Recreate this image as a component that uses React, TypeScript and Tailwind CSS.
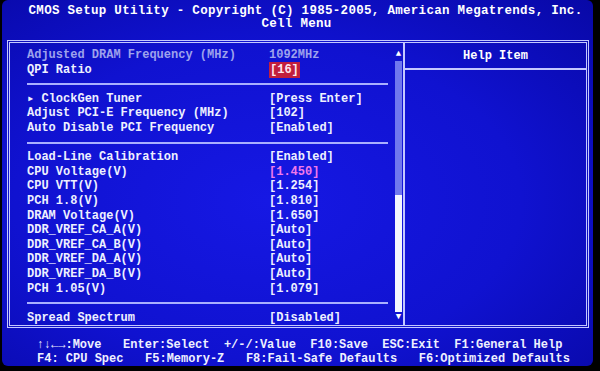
import React from 'react';

type Row = { label: string; value: string; tone?: 'dim' | 'sel' | 'pink' };

const groups: Row[][] = [
  [
    { label: 'Adjusted DRAM Frequency (MHz)', value: '1092MHz', tone: 'dim' },
    { label: 'QPI Ratio', value: '[16]', tone: 'sel' },
  ],
  [
    { label: '\u25B8 ClockGen Tuner', value: '[Press Enter]' },
    { label: 'Adjust PCI-E Frequency (MHz)', value: '[102]' },
    { label: 'Auto Disable PCI Frequency', value: '[Enabled]' },
  ],
  [
    { label: 'Load-Line Calibration', value: '[Enabled]' },
    { label: 'CPU Voltage(V)', value: '[1.450]', tone: 'pink' },
    { label: 'CPU VTT(V)', value: '[1.254]' },
    { label: 'PCH 1.8(V)', value: '[1.810]' },
    { label: 'DRAM Voltage(V)', value: '[1.650]' },
    { label: 'DDR_VREF_CA_A(V)', value: '[Auto]' },
    { label: 'DDR_VREF_CA_B(V)', value: '[Auto]' },
    { label: 'DDR_VREF_DA_A(V)', value: '[Auto]' },
    { label: 'DDR_VREF_DA_B(V)', value: '[Auto]' },
    { label: 'PCH 1.05(V)', value: '[1.079]' },
  ],
  [{ label: 'Spread Spectrum', value: '[Disabled]' }],
];

const SettingRow: React.FC<{ row: Row }> = ({ row }) => {
  const dim = row.tone === 'dim';
  return (
    <div className="grid grid-cols-[242px_1fr] h-[14.6px] items-center whitespace-pre">
      <span className={dim ? 'text-[#9ea2ec]' : 'text-[#eef0ff]'}>{row.label}</span>
      <span>
        {row.tone === 'sel' ? (
          <span className="bg-[#c21e3e] text-[#ffe6ee] px-[1px] py-[1px]">{row.value}</span>
        ) : (
          <span
            className={
              row.tone === 'pink' ? 'text-[#f27aea]' : dim ? 'text-[#9ea2ec]' : 'text-[#eef0ff]'
            }
          >
            {row.value}
          </span>
        )}
      </span>
    </div>
  );
};

const Separator: React.FC = () => (
  <div className="h-[14.6px] flex items-center">
    <div className="w-full h-[2px] bg-[#aab0ff]" />
  </div>
);

export default function App() {
  return (
    <div
      className="w-[600px] h-[371px] bg-black overflow-hidden font-bold text-[12px] text-[#eef0ff]"
      style={{ fontFamily: '"Liberation Mono", "DejaVu Sans Mono", monospace' }}
    >
      <div className="h-[366px] ml-[2px] mr-[7px] rounded-[6px] flex flex-col bg-[radial-gradient(ellipse_at_45%_55%,#1618e4_0%,#1012d0_55%,#0808a6_100%)]">
        {/* title */}
        <div className="pt-[5px] pl-[16px] text-center text-[12.5px] tracking-[0.3px] leading-[13px] text-white">
          <div>CMOS Setup Utility - Copyright (C) 1985-2005, American Megatrends, Inc.</div>
          <div className="pr-[18px]">Cell Menu</div>
        </div>

        {/* main box */}
        <div className="mt-[9px] ml-[5px] mr-[4px] h-[289px] flex border-[3px] border-double border-[#c4c8ff]">
          <div className="w-[393px] flex">
            <div className="flex-1 pl-[17px] pr-[6px] pt-[5px] leading-[14.5px]">
              {groups.map((g, i) => (
                <React.Fragment key={i}>
                  {g.map((r) => (
                    <SettingRow key={r.label} row={r} />
                  ))}
                  {i < groups.length - 1 && <Separator />}
                </React.Fragment>
              ))}
            </div>
            <div className="w-[9px] flex flex-col items-center pt-[6px] pb-[3px]">
              <span className="text-[9px] leading-[10px] text-white">{'\u25B2'}</span>
              <div className="w-[7px] flex-1 flex flex-col mt-[2px]">
                <div className="h-[134px] bg-[#7078ee]" />
                <div className="flex-1 bg-[#f4f6ff]" />
              </div>
              <span className="text-[9px] leading-[10px] text-white">{'\u25BC'}</span>
            </div>
          </div>
          <div className="flex-1 border-l-2 border-[#c4c8ff] flex flex-col">
            <div className="h-[27px] border-b-2 border-[#c4c8ff] flex items-center justify-center text-white">
              Help Item
            </div>
          </div>
        </div>

        {/* footer */}
        <div className="mt-[10px] text-center whitespace-pre leading-[14px] text-[#eef0ff]">
          <div className="pl-[4px]">{'\u2191\u2193\u2190\u2192:Move   Enter:Select  +/-/:Value  F10:Save  ESC:Exit  F1:General Help'}</div>
          <div className="pl-[12px]">{'F4: CPU Spec   F5:Memory-Z   F8:Fail-Safe Defaults   F6:Optimized Defaults'}</div>
        </div>
      </div>
    </div>
  );
}
